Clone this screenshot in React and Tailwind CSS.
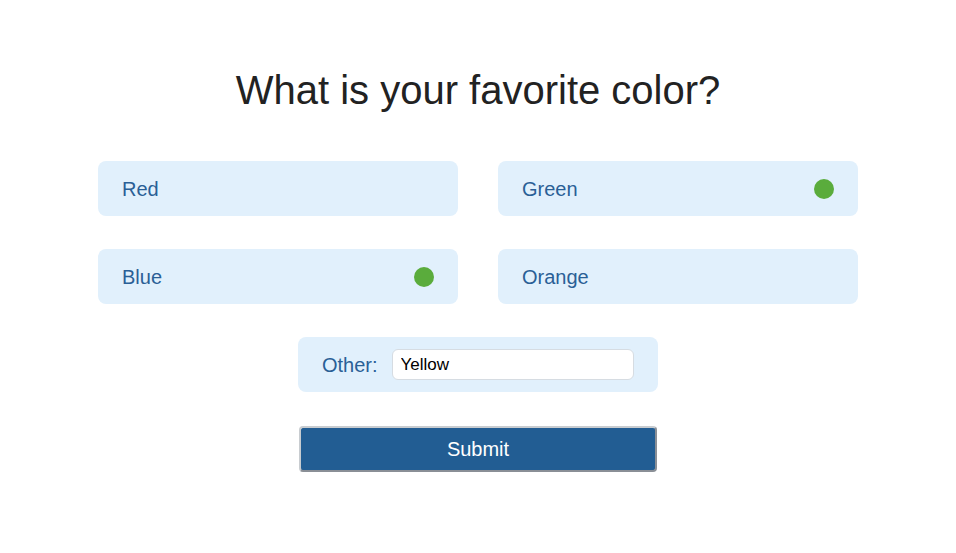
import React from 'react';

const options = [
  { label: 'Red', picked: false },
  { label: 'Green', picked: true },
  { label: 'Blue', picked: true },
  { label: 'Orange', picked: false },
];

const Option = ({ label, picked }) => (
  <div className="flex items-center justify-between h-[55px] px-6 rounded-lg bg-[#e1f0fc]">
    <span className="text-[20px] text-[#2a5f96]">{label}</span>
    {picked && <span className="w-5 h-5 rounded-full bg-[#5aac3c]" />}
  </div>
);

export default function App() {
  return (
    <div className="w-[956px] h-[553px] bg-white flex flex-col items-center font-['Liberation_Sans',Arial,sans-serif]">
      <h1 className="mt-[64px] text-[40px] leading-[52px] text-[#222]">What is your favorite color?</h1>

      {/* options grid */}
      <div className="mt-[45px] grid grid-cols-2 gap-x-10 gap-y-[33px] w-[760px]">
        {options.map((o) => (
          <Option key={o.label} {...o} />
        ))}
      </div>

      <div className="mt-[33px] w-[360px] h-[55px] rounded-lg bg-[#e1f0fc] flex items-center pl-6 pr-6 gap-[14px]">
        <span className="text-[20px] text-[#2a5f96]">Other:</span>
        <input
          defaultValue="Yellow"
          className="w-[243px] h-[31px] rounded-md bg-white border border-[#d6dce2] px-2 text-[17px] text-black outline-none"
        />
      </div>

      <button className="mt-[34px] w-[358px] h-[46px] rounded bg-[#225d93] text-white text-[20px] border-2 border-[#8a8f96] border-t-[#c8ccd0] border-l-[#c8ccd0]">
        Submit
      </button>
    </div>
  );
}
